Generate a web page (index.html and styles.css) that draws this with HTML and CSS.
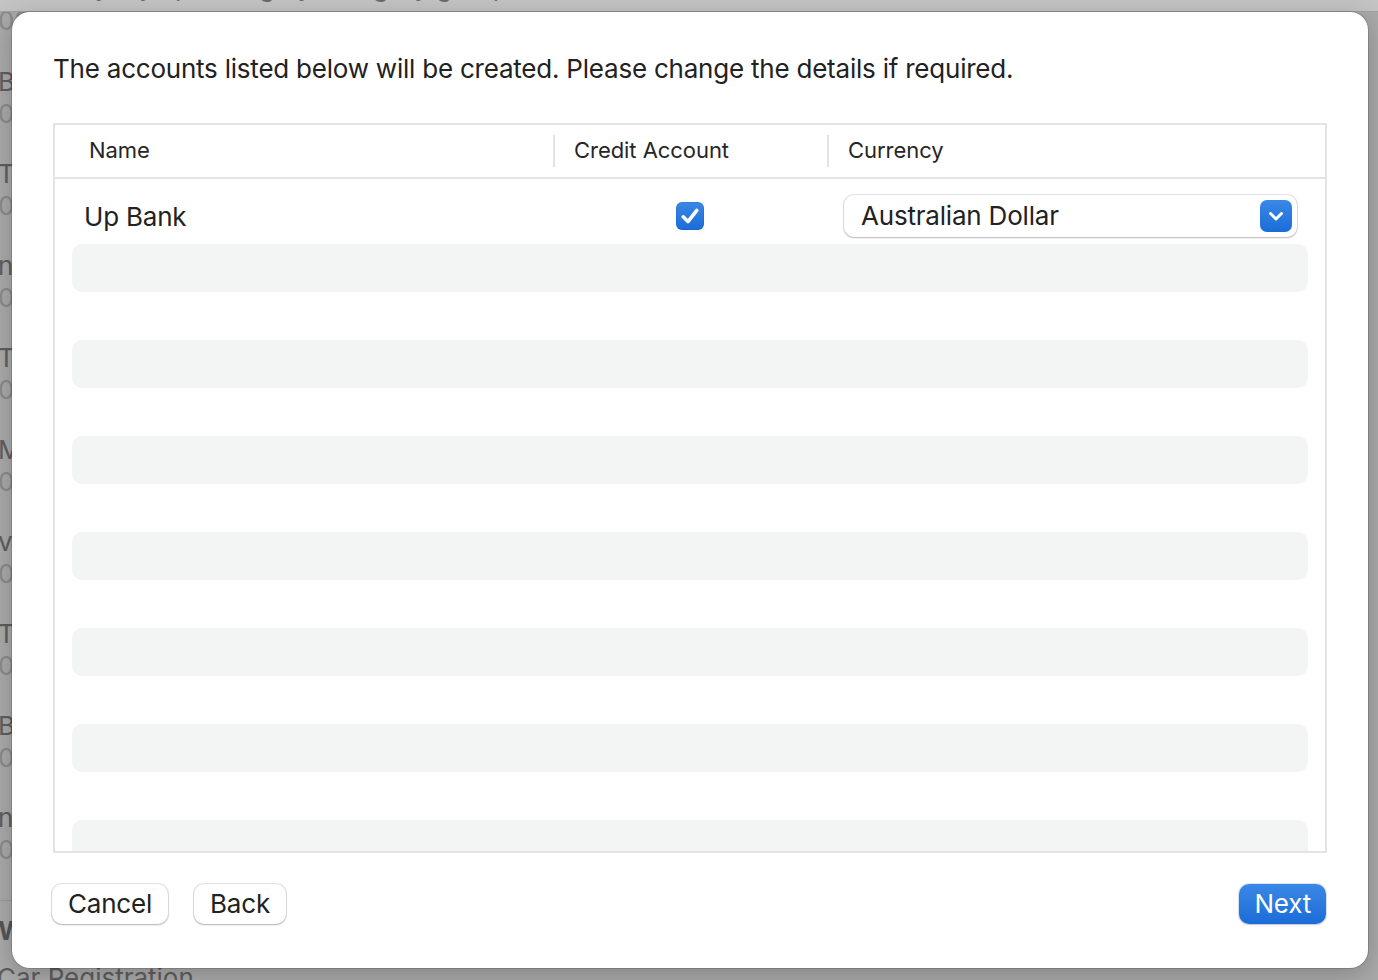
FILE: index.html
```html
<!DOCTYPE html>
<html lang="en">
<head>
<meta charset="utf-8">
<title>Create Accounts</title>
<link rel="stylesheet" href="styles.css">
</head>
<body>
<div class="backdrop">
  <div class="toolbar"><span class="toolbar-text">Everyday spending by category group transfers</span></div>
  <div class="bg-list">
    <div class="bg-sub bg-first">09</div>
    <div class="bg-item"><div class="bg-title">Bupa</div><div class="bg-sub">08</div></div>
    <div class="bg-item"><div class="bg-title">Tram</div><div class="bg-sub">08</div></div>
    <div class="bg-item"><div class="bg-title">nib</div><div class="bg-sub">08</div></div>
    <div class="bg-item"><div class="bg-title">Train</div><div class="bg-sub">08</div></div>
    <div class="bg-item"><div class="bg-title">Medi</div><div class="bg-sub">08</div></div>
    <div class="bg-item"><div class="bg-title">vacs</div><div class="bg-sub">08</div></div>
    <div class="bg-item"><div class="bg-title">Taxi</div><div class="bg-sub">08</div></div>
    <div class="bg-item"><div class="bg-title">Bus</div><div class="bg-sub">08</div></div>
    <div class="bg-item"><div class="bg-title">nib</div><div class="bg-sub">05</div></div>
    <div class="bg-section">Wk</div>
  </div>
  <div class="bg-footer">Car Registration</div>
</div>

<div class="sheet">
  <p class="intro">The accounts listed below will be created. Please change the details if required.</p>

  <div class="table">
    <div class="thead">
      <div class="th th-name">Name</div>
      <div class="th th-credit">Credit Account</div>
      <div class="th th-cur">Currency</div>
    </div>
    <div class="tbody">
      <div class="row row-data">
        <div class="cell cell-name">Up Bank</div>
        <div class="cell cell-credit">
          <span class="checkbox" role="checkbox" aria-checked="true">
            <svg viewBox="0 0 28 28" width="28" height="28" aria-hidden="true">
              <path d="M7.2 14.8 L12 19.6 L20.8 8.4" fill="none" stroke="#fff" stroke-width="3.6" stroke-linecap="round" stroke-linejoin="round"/>
            </svg>
          </span>
        </div>
        <div class="cell cell-cur">
          <div class="select">
            <span class="select-label">Australian Dollar</span>
            <span class="select-btn">
              <svg viewBox="0 0 32 32" width="32" height="32" aria-hidden="true">
                <path d="M10.5 13.5 L16 19 L21.5 13.5" fill="none" stroke="#fff" stroke-width="3" stroke-linecap="round" stroke-linejoin="round"/>
              </svg>
            </span>
          </div>
        </div>
      </div>
      <div class="row stripe"></div>
      <div class="row blank"></div>
      <div class="row stripe"></div>
      <div class="row blank"></div>
      <div class="row stripe"></div>
      <div class="row blank"></div>
      <div class="row stripe"></div>
      <div class="row blank"></div>
      <div class="row stripe"></div>
      <div class="row blank"></div>
      <div class="row stripe"></div>
      <div class="row blank"></div>
      <div class="row stripe"></div>
    </div>
  </div>

  <div class="actions">
    <button class="btn">Cancel</button>
    <button class="btn">Back</button>
    <span class="spacer"></span>
    <button class="btn btn-primary">Next</button>
  </div>
</div>
</body>
</html>
```

FILE: styles.css
```css
* { box-sizing: border-box; }

html, body {
  margin: 0;
  padding: 0;
  width: 1378px;
  height: 980px;
  overflow: hidden;
}

body {
  background: #a9a9a9;
  font-family: Inter, "Noto Sans", "DejaVu Sans", sans-serif;
  color: #262626;
  position: relative;
}

/* ---------- backdrop (window behind the sheet) ---------- */
.backdrop {
  display: flex;
  flex-direction: column;
  height: 980px;
  overflow: hidden;
}

.toolbar {
  height: 12px;
  flex: none;
  background: #c3c3c3;
  overflow: hidden;
  border-bottom: 1px solid #a0a0a0;
}

.toolbar-text {
  display: block;
  margin-top: -29px;
  margin-left: 40px;
  font-size: 26px;
  line-height: 32px;
  color: #6a6a6a;
  white-space: nowrap;
}

.bg-list {
  display: flex;
  flex-direction: column;
  width: 40px;
  overflow: hidden;
  margin-left: -2px;
  white-space: nowrap;
  flex: none;
}

.bg-item {
  display: flex;
  flex-direction: column;
  height: 92px;
}

.bg-title {
  font-size: 26px;
  line-height: 32px;
  color: #5e5e5e;
}

.bg-sub {
  font-size: 26px;
  line-height: 32px;
  color: #8a8a8a;
}

.bg-first {
  margin-top: -7px;
  height: 61px;
}

.bg-section {
  margin-top: 6px;
  padding-top: 14px;
  border-top: 1px solid #9a9a9a;
  font-size: 26px;
  line-height: 32px;
  font-weight: 700;
  color: #555;
  height: 62px;
}

.bg-footer {
  margin-left: -3px;
  font-size: 26px;
  line-height: 32px;
  color: #5e5e5e;
  white-space: nowrap;
}

/* ---------- sheet ---------- */
.sheet {
  position: absolute;
  top: 12px;
  left: 12px;
  width: 1356px;
  height: 956px;
  background: #ffffff;
  border-radius: 18px;
  box-shadow: 0 0 0 1px rgba(0, 0, 0, 0.14), 0 6px 24px rgba(0, 0, 0, 0.22);
  padding: 41px 41px 0 41px;
  display: flex;
  flex-direction: column;
}

.intro {
  margin: 0;
  font-size: 26px;
  line-height: 32px;
  letter-spacing: -0.22px;
  color: #222222;
  white-space: nowrap;
}

/* ---------- table ---------- */
.table {
  margin-top: 38px;
  height: 730px;
  border: 2px solid #e3e3e3;
  display: flex;
  flex-direction: column;
  overflow: hidden;
}

.thead {
  flex: none;
  height: 54px;
  border-bottom: 2px solid #e3e3e3;
  display: grid;
  grid-template-columns: 498px 274px 1fr;
  align-items: center;
}

.th {
  font-size: 22px;
  line-height: 30px;
  color: #262626;
  letter-spacing: -0.05px;
  padding-bottom: 2px;
}

.th-name { padding-left: 34px; }

.th-credit,
.th-cur {
  padding-left: 19px;
  border-left: 2px solid #e3e3e3;
}

.tbody {
  flex: 1;
  padding: 9px 17px 0 17px;
  display: flex;
  flex-direction: column;
  overflow: hidden;
}

.row {
  flex: none;
  height: 48px;
}

.row-data {
  height: 56px;
  display: grid;
  grid-template-columns: 481px 274px 1fr;
  align-items: center;
}

.stripe {
  background: #f3f4f4;
  border-radius: 10px;
}

.cell-name {
  padding-left: 12px;
  font-size: 26px;
  line-height: 32px;
  letter-spacing: -0.2px;
  color: #222222;
  padding-top: 2px;
}

.cell-credit {
  display: flex;
  justify-content: center;
  padding-left: 0;
}

.checkbox {
  width: 28px;
  height: 28px;
  border-radius: 6px;
  background: linear-gradient(#3a88e6, #1b6cd8);
  box-shadow: inset 0 0 0 1px rgba(0, 0, 0, 0.06);
  display: block;
}

.checkbox svg { display: block; }

.cell-cur {
  padding-left: 17px;
}

.select {
  width: 453px;
  height: 42px;
  border-radius: 10px;
  background: #fff;
  box-shadow: 0 0 0 1px rgba(0, 0, 0, 0.1), 0 1px 2px rgba(0, 0, 0, 0.2);
  display: flex;
  align-items: center;
  justify-content: space-between;
  padding: 0 5px 0 17px;
}

.select-label {
  font-size: 26px;
  line-height: 32px;
  letter-spacing: -0.2px;
  color: #222222;
}

.select-btn {
  width: 32px;
  height: 32px;
  border-radius: 7px;
  background: linear-gradient(#3a88e6, #1b6cd8);
  display: block;
}

.select-btn svg { display: block; }

/* ---------- actions ---------- */
.actions {
  margin-top: 31px;
  display: flex;
  align-items: center;
  gap: 26px;
  margin-left: -1px;
}

.spacer { flex: 1; }

.btn {
  height: 40px;
  padding: 0 16px;
  border: none;
  border-radius: 10px;
  background: #ffffff;
  box-shadow: 0 0 0 1px rgba(0, 0, 0, 0.1), 0 1px 2px rgba(0, 0, 0, 0.22);
  font-family: Inter, "Noto Sans", "DejaVu Sans", sans-serif;
  font-size: 26px;
  line-height: 32px;
  letter-spacing: -0.2px;
  color: #222222;
}

.btn-primary {
  background: linear-gradient(#3a88e6, #1b6cd8);
  color: #ffffff;
  box-shadow: 0 0 0 1px rgba(0, 60, 160, 0.12), 0 1px 2px rgba(0, 0, 0, 0.15);
  padding: 0 15px;
  margin-right: 1px;
}
```
